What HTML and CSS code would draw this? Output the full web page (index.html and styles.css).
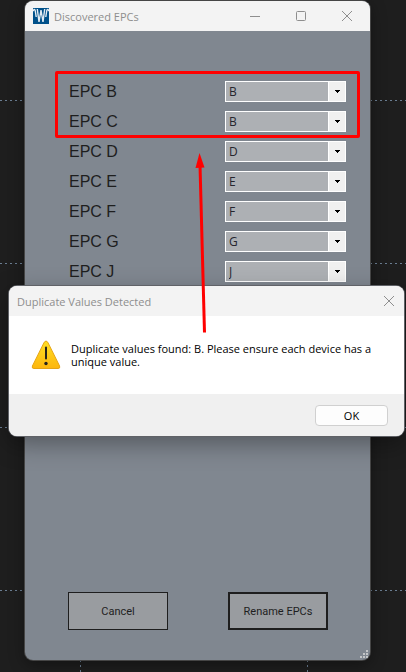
FILE: index.html
```html
<!DOCTYPE html>
<html lang="en">
  <head>
    <meta charset="UTF-8" />
    <meta name="viewport" content="width=device-width, initial-scale=1.0" />
    <title>Discovered EPCs</title>
    <link rel="stylesheet" href="styles.css">
  </head>
  <body>
    <!-- dashed grid behind the windows -->
    <svg class="grid" aria-hidden="true">
      <path d="M0 100.5H3000M0 263.5H3000M0 427.5H3000M0 590.5H3000" />
      <path d="M80.500 0V3000M307.500 0V3000" />
    </svg>

    <main class="window">
      <header class="titlebar">
        <svg class="logo" width="16" height="16" viewBox="0 0 16 16" aria-hidden="true">
          <rect width="16" height="16" fill="#00518a" />
          <path d="M0 3L1 1.500Q2 1 2.300 3L3.200 9M4.300 1L6 14L8 2L10 14L11.700 1M12.800 9L13.700 3Q14 1 15 1.500L16 3" fill="none" stroke="#e4edf4" stroke-width="1.400" />
        </svg>
        <h1 class="title">Discovered EPCs</h1>
        <div class="window-buttons">
          <button type="button" aria-label="Minimize"><svg width="12" height="12" viewBox="0 0 12 12"><path d="M1 6.500H11" /></svg></button>
          <button type="button" aria-label="Maximize"><svg width="12" height="12" viewBox="0 0 12 12"><rect x="1.500" y="1.500" width="9" height="9" rx="1" /></svg></button>
          <button type="button" aria-label="Close"><svg width="12" height="12" viewBox="0 0 12 12"><path d="M1 1L11 11M11 1L1 11" /></svg></button>
        </div>
      </header>

      <form class="content">
        <div class="epc-list" id="epcList">
          <div class="highlight"></div>
        </div>
        <div class="actions">
          <button type="button" class="action">Cancel</button>
          <button type="submit" class="action default">Rename EPCs</button>
        </div>
        <svg class="grip" width="8" height="8" viewBox="0 0 8 8" aria-hidden="true">
          <path d="M6 0h2v2h-2zM3 3h2v2h-2zM6 3h2v2h-2zM0 6h2v2h-2zM3 6h2v2h-2zM6 6h2v2h-2z" fill="#c3c5c7" />
        </svg>
      </form>
    </main>

    <section class="dialog" role="alertdialog" aria-labelledby="dialogTitle">
      <header class="titlebar dialog-titlebar">
        <h2 class="title" id="dialogTitle">Duplicate Values Detected</h2>
        <div class="window-buttons">
          <button type="button" aria-label="Close"><svg width="12" height="12" viewBox="0 0 12 12"><path d="M1 1L11 11M11 1L1 11" /></svg></button>
        </div>
      </header>
      <div class="message">
        <svg class="warning" width="30" height="30" viewBox="0 0 30 30" aria-hidden="true">
          <defs>
            <linearGradient id="warn" x1="0" y1="0" x2="0" y2="1">
              <stop offset="0" stop-color="#ffdf22" />
              <stop offset="1" stop-color="#fdb60d" />
            </linearGradient>
          </defs>
          <path d="M13.200 2.300Q15 -0.500 16.800 2.300L28.600 26Q29.500 28.500 27 28.500H3Q0.500 28.500 1.400 26Z" fill="url(#warn)" stroke="#e6a414" />
          <path d="M15 7.500V18.500" stroke="#27231c" stroke-width="2" stroke-linecap="round" />
          <circle cx="15" cy="23.500" r="1.700" fill="#27231c" />
        </svg>
        <p>Duplicate values found: B. Please ensure each device has a unique value.</p>
      </div>
      <footer class="dialog-footer">
        <button type="button" class="ok">OK</button>
      </footer>
    </section>

    <svg class="pointer" width="14" height="180" viewBox="0 0 14 180" aria-hidden="true">
      <path d="M5 12L9.500 179.500" stroke="#ff0000" stroke-width="3" />
      <path d="M4.500 0L9.500 14.500L0.500 15Z" fill="#ff0000" />
    </svg>

    <script>
      const devices = [
        { name: 'B', value: 'B' },
        { name: 'C', value: 'B' },
        { name: 'D', value: 'D' },
        { name: 'E', value: 'E' },
        { name: 'F', value: 'F' },
        { name: 'G', value: 'G' },
        { name: 'J', value: 'J' },
      ];

      const epcListElement = document.getElementById('epcList');

      devices.forEach((device) => {
        const rowElement = document.createElement('div');
        rowElement.classList.add('epc-row');
        rowElement.innerHTML = `
          <label for="epc${device.name}">EPC ${device.name}</label>
          <div class="combo">
            <select id="epc${device.name}">
              ${devices
                .map((d) => `<option ${d.name === device.value ? 'selected' : ''}>${d.name}</option>`)
                .join('')}
            </select>
            <span class="combo-arrow"><svg width="5" height="3" viewBox="0 0 5 3"><path d="M0 0H5V1H4V2H3V3H2V2H1V1H0Z" /></svg></span>
          </div>
        `;
        epcListElement.appendChild(rowElement);
      });
    </script>
  </body>
</html>
```
FILE: styles.css
```css
* {
  box-sizing: border-box;
}

body {
  margin: 0;
  min-height: 100vh;
  padding: 1px 36px 12px 25px;
  display: flex;
  position: relative;
  overflow: hidden;
  background-color: #1e1e1e;
  font-family: "Open Sans", "Noto Sans", sans-serif;
  font-size: 11px;
}

.grid {
  position: absolute;
  top: 0;
  left: 0;
  width: 100%;
  height: 100%;
  fill: none;
  stroke: #6a7d91;
  stroke-dasharray: 2 3;
}

.window {
  position: relative;
  flex: 1;
  display: flex;
  flex-direction: column;
  background-color: #808790;
  border-radius: 8px;
  overflow: hidden;
  box-shadow: 0 0 0 1px #454545, 0 4px 16px rgba(0, 0, 0, 0.4);
}

.titlebar {
  display: flex;
  align-items: center;
  height: 30px;
  padding: 0 11px 0 8px;
  background-color: #f3f3f3;
}

.logo {
  margin-right: 5px;
}

.title {
  flex: 1;
  margin: 0;
  font-size: 11px;
  font-weight: normal;
  color: #8e8e8e;
}

.window-buttons {
  display: flex;
  gap: 22px;
}

.window-buttons button {
  display: flex;
  justify-content: center;
  width: 24px;
  padding: 6px 0;
  border: 0;
  background: none;
}

.window-buttons svg {
  fill: none;
  stroke: #8e8e8e;
}

.content {
  flex: 1;
  display: flex;
  flex-direction: column;
  justify-content: space-between;
  margin: 0;
  padding: 45px 24px 30px 43px;
}

.epc-list {
  position: relative;
}

/* marks the two rows that share a value */
.highlight {
  position: absolute;
  top: -5px;
  left: -13px;
  right: -14px;
  height: 67px;
  border: 3px solid #ff0000;
  border-radius: 2px;
  pointer-events: none;
}

.epc-row {
  display: flex;
  align-items: center;
  justify-content: space-between;
  height: 30px;
}

.epc-row label {
  padding: 1px 0 0 1px;
  font-family: "Liberation Sans", Arial, sans-serif;
  font-size: 16px;
  line-height: 20px;
  color: #1e1e1e;
}

.combo {
  display: flex;
  width: 121px;
  height: 21px;
  border: 1px solid #ffffff;
  position: relative;
}

.combo select {
  flex: 1;
  padding: 0 20px 0 3px;
  border: 0;
  border-radius: 0;
  appearance: none;
  background-color: #adb0b4;
  color: #26262e;
  font-family: inherit;
  font-size: 12px;
}

.combo-arrow {
  position: absolute;
  top: 0;
  right: 0;
  bottom: 0;
  display: flex;
  align-items: center;
  justify-content: center;
  width: 17px;
  border-left: 1px solid #ffffff;
  background-color: #f0f0f0;
  pointer-events: none;
}

.actions {
  display: flex;
  justify-content: space-between;
  padding-right: 18px;
}

.action {
  width: 100px;
  height: 38px;
  padding: 0;
  border: 1px solid #1e1e1e;
  background-color: #999ca0;
  color: #1e1e1e;
  font-family: Roboto, "Liberation Sans", sans-serif;
  font-size: 11px;
}

.action.default {
  border-width: 2px;
}

.grip {
  position: absolute;
  right: 2px;
  bottom: 2px;
}

.dialog {
  position: absolute;
  top: 286px;
  left: 9px;
  right: 2px;
  background-color: #ffffff;
  border-radius: 8px;
  overflow: hidden;
  box-shadow: 0 0 0 1px #606267, 0 8px 24px rgba(0, 0, 0, 0.35);
}

.dialog-titlebar {
  padding: 0 3px 0 8px;
}

.message {
  display: flex;
  align-items: center;
  gap: 10px;
  height: 78px;
  padding: 0 30px 0 22px;
}

.message p {
  flex: 1;
  margin: 0;
  font-size: 11px;
  line-height: 13px;
  color: #000000;
}

.warning {
  flex: none;
}

.dialog-footer {
  display: flex;
  justify-content: flex-end;
  padding: 11px 16px 10px;
  background-color: #f0f0f0;
}

.ok {
  width: 73px;
  height: 21px;
  padding: 0;
  border: 1px solid #d0d0d0;
  border-radius: 4px;
  background-color: #fdfdfd;
  color: #000000;
  font-family: inherit;
  font-size: 11px;
}

/* arrow from the dialog up to the highlighted rows */
.pointer {
  position: absolute;
  top: 153px;
  left: 195px;
}
```
